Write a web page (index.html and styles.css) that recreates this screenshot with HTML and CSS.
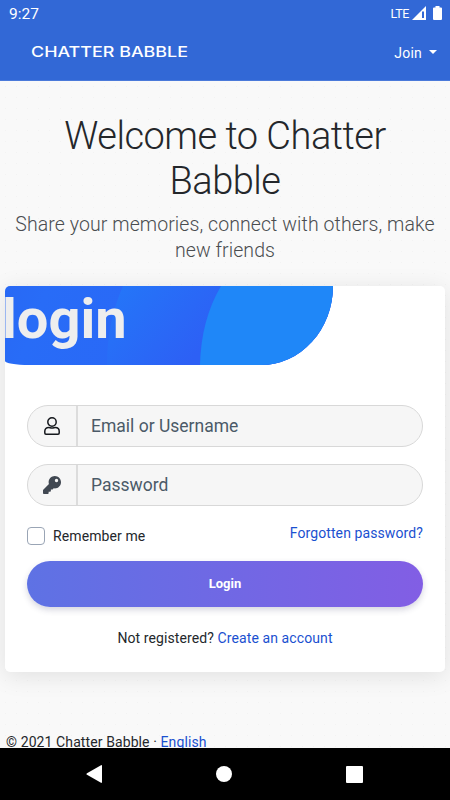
FILE: index.html
```
<!DOCTYPE html>
<html lang="en">
<head>
    <meta charset="UTF-8">
    <meta name="viewport" content="width=device-width, initial-scale=1.0">
    <title>Chatter Babble</title>
    <link rel="stylesheet" href="styles.css">
</head>
<body>

<div class="status-bar">
    <span class="time">9:27</span>
    <span class="lte">LTE</span>
    <svg class="signal" width="14" height="14" viewBox="0 0 14 14">
        <path d="M0 14L14 0V14Z" fill="#fff"/>
        <path d="M10 5.5h2V12h-2z" fill="#3268d6"/>
    </svg>
    <svg class="battery" width="9" height="14" viewBox="0 0 9 14">
        <path d="M2.5 0h4v1.4H8q1 0 1 1V13q0 1-1 1H1q-1 0-1-1V2.400q0-1 1-1h1.500z" fill="#fff"/>
    </svg>
</div>

<nav class="navbar">
    <a class="brand">
        <svg width="160" height="20" viewBox="0 0 160 20">
            <text x="0" y="15" textLength="157" lengthAdjust="spacingAndGlyphs">CHATTER BABBLE</text>
        </svg>
    </a>
    <a class="join">Join <span class="caret"></span></a>
</nav>

<main>
    <header class="intro">
        <h1>Welcome to Chatter<br>Babble</h1>
        <p>Share your memories, connect with others, make<br>new friends</p>
    </header>

    <section class="card">
        <div class="banner">
            <svg class="banner-shapes" width="328" height="79" viewBox="0 0 328 79">
                <defs>
                    <linearGradient id="blue" gradientUnits="userSpaceOnUse" x1="110" y1="0" x2="190" y2="70">
                        <stop offset="0" stop-color="#2476f8"/>
                        <stop offset="1" stop-color="#2d60f5"/>
                    </linearGradient>
                </defs>
                <path d="M118 0Q102 36 102 79H328V0Z" fill="url(#blue)"/>
                <path d="M216 0Q196 34 195 79H328V0Z" fill="#1f87f8"/>
            </svg>
            <h2>login</h2>
        </div>

        <form>
            <div class="field">
                <span class="field-icon">
                    <svg width="16" height="18" viewBox="0 0 16 18" fill="none" stroke="#15181d" stroke-width="1.5">
                        <circle cx="8" cy="5" r="4.2"/>
                        <path d="M4.700 10.400C2.300 10.400.8 12 .8 14.200V16q0 1.200 1.200 1.200h12q1.200 0 1.200-1.200v-1.800c0-2.200-1.500-3.800-3.900-3.800-1.200 0-1.700.7-3.300.7s-2.100-.7-3.300-.7z"/>
                    </svg>
                </span>
                <input type="text" placeholder="Email or Username">
            </div>
            <div class="field">
                <span class="field-icon">
                    <svg width="18" height="18" viewBox="0 0 512 512" fill="#414852">
                        <path d="M512 176c0 97-79 176-176 176-11 0-22-1-33-3l-24 27c-5 5-11 8-18 8h-37v40c0 13-11 24-24 24h-40v40c0 13-11 24-24 24H24c-13 0-24-11-24-24v-78c0-6 3-12 7-17l162-162c-6-17-9-36-9-55C160 79 239 0 336 0s176 79 176 176zM336 128a48 48 0 1 0 96 0 48 48 0 1 0-96 0z"/>
                    </svg>
                </span>
                <input type="password" placeholder="Password">
            </div>
            <div class="options">
                <label class="remember"><input type="checkbox">Remember me</label>
                <a class="forgot">Forgotten password?</a>
            </div>
            <button type="submit">Login</button>
            <p class="register">Not registered? <a>Create an account</a></p>
        </form>
    </section>

    <footer>© 2021 Chatter Babble · <a>English</a></footer>
</main>

<div class="system-nav">
    <svg width="16" height="18" viewBox="0 0 16 18"><path d="M1 8.200L15 .2q1-.4 1 .7v16.200q0 1.100-1 .7L1 9.800q-1.200-.8 0-1.600z" fill="#fff"/></svg>
    <svg width="16" height="16" viewBox="0 0 16 16"><circle cx="8" cy="8" r="8" fill="#fff"/></svg>
    <svg width="17" height="17" viewBox="0 0 17 17"><rect width="17" height="17" rx="1" fill="#fff"/></svg>
</div>

</body>
</html>
```
FILE: styles.css
```
* {
    box-sizing: border-box;
}
body {
    margin: 0;
    height: 800px;
    display: flex;
    flex-direction: column;
    overflow: hidden;
    font-family: Roboto, Arial, sans-serif;
    font-size: 14px;
    color: #24272b;
    background-color: #f9f9f9;
}
a {
    color: #1a50d0;
}
h1, h2, p {
    margin: 0;
}
.status-bar {
    flex: none;
    height: 26px;
    padding: 0 8px 0 9px;
    display: flex;
    align-items: center;
    color: #fff;
    background-color: #3268d6;
}
.time {
    flex: 1;
    font-size: 15.5px;
    padding-top: 1px;
}
.lte {
    font-size: 12.5px;
    letter-spacing: -0.4px;
}
.signal {
    margin: 0 7px 0 3px;
}
.navbar {
    flex: none;
    height: 55px;
    padding: 0 13px 0 31px;
    display: flex;
    justify-content: space-between;
    align-items: center;
    background-color: #3268d6;
    border-bottom: 1px solid #4b7ada;
}
.brand {
    height: 20px;
    margin-bottom: 2px;
}
.brand svg {
    display: block;
}
.brand text {
    font-family: Inter, sans-serif;
    font-size: 14.5px;
    font-weight: 500;
    fill: #fff;
}
.join {
    display: flex;
    align-items: center;
    gap: 7px;
    font-size: 14px;
    letter-spacing: 0.2px;
    color: #fff;
}
.caret {
    border: 4.5px solid transparent;
    border-top-color: #fff;
    border-bottom: 0;
    margin-bottom: 3px;
}
main {
    flex: 1;
    min-height: 0;
    overflow: hidden;
    padding: 0 5px;
    background-image: radial-gradient(#f3f3f3 0.7px, transparent 1px);
    background-size: 11px 11px;
}
.intro {
    padding-top: 33px;
    text-align: center;
    white-space: nowrap;
}
.intro h1 {
    font-size: 38px;
    line-height: 44.5px;
    font-weight: 300;
    letter-spacing: -0.5px;
}
.intro p {
    margin-top: 9px;
    font-size: 19.5px;
    line-height: 26px;
    font-weight: 300;
    letter-spacing: 0.08px;
    color: #4a4d50;
}
.card {
    height: 386px;
    overflow: hidden;
    margin-top: 22px;
    background-color: #fff;
    border-radius: 5px;
    box-shadow: 0 4px 24px rgba(0, 0, 0, 0.1);
}
.banner {
    position: relative;
    width: 328px;
    height: 79px;
    overflow: hidden;
    border-radius: 0 0 72px 24px / 0 0 79px 4px;
    background: linear-gradient(110deg, #2869f5, #286cf7 12%, #2c62f6);
}
.banner-shapes {
    position: absolute;
    top: 0;
    left: 0;
}
.banner h2 {
    position: relative;
    margin-left: -3px;
    font-size: 56px;
    line-height: 66px;
    font-weight: 700;
    color: #eee;
}
form {
    padding: 40px 22px 0;
}
.field {
    height: 42px;
    margin-bottom: 17px;
    display: flex;
    overflow: hidden;
    border: 1px solid #d8d8d8;
    border-radius: 21px;
    background-color: #f6f6f6;
}
.field-icon {
    width: 50px;
    display: flex;
    align-items: center;
    justify-content: center;
    border-right: 2px solid #dcdcdc;
}
.field input {
    flex: 1;
    min-width: 0;
    padding: 0 13px;
    border: 0;
    outline: 0;
    background: transparent;
    font-family: inherit;
    font-size: 17.5px;
}
.field input::placeholder {
    color: #4b5a68;
}
.options {
    height: 38px;
    display: flex;
    justify-content: space-between;
}
.remember {
    height: 26px;
    display: flex;
    align-items: center;
    letter-spacing: 0.1px;
}
.remember input {
    appearance: none;
    width: 18px;
    height: 18px;
    margin: 0 8px 0 0;
    border: 1px solid #9aa5b5;
    border-radius: 4px;
    background-color: #fff;
}
.forgot {
    line-height: 20px;
    letter-spacing: 0.1px;
}
button {
    display: block;
    width: 100%;
    height: 46px;
    padding: 0 0 2px;
    border: 0;
    border-radius: 23px;
    font-family: inherit;
    font-size: 13px;
    font-weight: 700;
    color: #fff;
    background: linear-gradient(to right, #5e72e4, #825ee4);
    box-shadow: 0 3px 6px rgba(50, 50, 93, 0.2);
}
.register {
    margin-top: 22px;
    line-height: 18px;
    letter-spacing: 0.1px;
    text-align: center;
}
footer {
    margin: 62px 0 0 1px;
    line-height: 16px;
    letter-spacing: 0.1px;
}
.system-nav {
    flex: none;
    height: 52px;
    padding: 0 87px 0 86px;
    display: flex;
    align-items: center;
    justify-content: space-between;
    background-color: #000;
}
```
